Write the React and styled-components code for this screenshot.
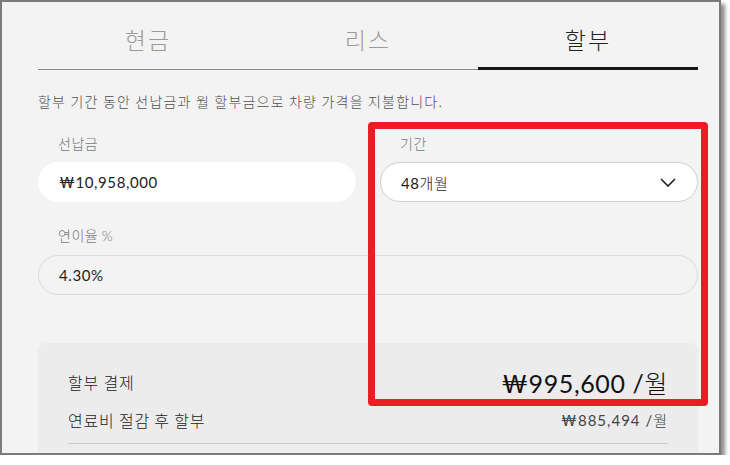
import styled, { createGlobalStyle } from 'styled-components'

const GlobalStyle = createGlobalStyle`
  body {
    margin: 0;
    background: #ffffff;
    font-family: 'Lato', 'Noto Sans CJK KR', sans-serif;
  }
`

const KR = `'Noto Sans CJK KR', 'Noto Sans', sans-serif`
const NUM = `'Lato', 'Noto Sans CJK KR', sans-serif`

const tabs = ['현금', '리스', '할부']

const App = () => {
  return (
    <>
      <GlobalStyle />
      <Frame>
        <Content>
          <TabBar>
            {tabs.map((t, i) => (
              <Tab key={t} active={i === 2}>
                {t}
              </Tab>
            ))}
          </TabBar>

          <Description>할부 기간 동안 선납금과 월 할부금으로 차량 가격을 지불합니다.</Description>

          <FormGrid>
            <Field>
              <Label>선납금</Label>
              <Input variant="solid">₩10,958,000</Input>
            </Field>
            <Field>
              <Label>기간</Label>
              <Input variant="select">
                <span>
                  48<Kr>개월</Kr>
                </span>
                <Chevron viewBox="0 0 16 9">
                  <polyline points="1,1 8,8 15,1" />
                </Chevron>
              </Input>
            </Field>
            <Field wide>
              <Label>
                연이율 <Num>%</Num>
              </Label>
              <Input variant="outline">4.30%</Input>
            </Field>
          </FormGrid>

          <Summary>
            <Row height={34}>
              <RowLabel>할부 결제</RowLabel>
              <RowValue big>
                ₩995,600 /<Kr>월</Kr>
              </RowValue>
            </Row>
            <Row height={45} line>
              <RowLabel>연료비 절감 후 할부</RowLabel>
              <RowValue>
                ₩885,494 /<Kr>월</Kr>
              </RowValue>
            </Row>
            <Row height={40}>
              <RowLabel />
            </Row>
          </Summary>
        </Content>
        <Highlight />
      </Frame>
    </>
  )
}

export default App

const Frame = styled.div`
  position: relative;
  width: 717px;
  height: 451px;
  border: 2px solid #7b7b7b;
  background: #f3f3f3;
  box-shadow: 4px 4px 4px rgba(0, 0, 0, 0.45);
`

const Content = styled.div`
  height: 100%;
  overflow: hidden;
  padding: 0 21px 0 36px;
  box-sizing: border-box;
`

const TabBar = styled.div`
  display: grid;
  grid-template-columns: repeat(3, 1fr);
  box-shadow: inset 0 -1px 0 #8a8a8a;
`

const Tab = styled.div`
  height: 68px;
  box-sizing: border-box;
  padding-top: 26px;
  text-align: center;
  font-family: ${KR};
  font-weight: 300;
  font-size: 23px;
  line-height: 23px;
  letter-spacing: 2px;
  color: ${(p) => (p.active ? '#222' : '#9a9a9a')};
  border-bottom: 3px solid ${(p) => (p.active ? '#16181c' : 'transparent')};
`

const Description = styled.p`
  margin: 22px 0 0;
  font-family: ${KR};
  font-weight: 300;
  font-size: 14px;
  line-height: 18px;
  letter-spacing: 1.2px;
  color: #505050;
`

const FormGrid = styled.div`
  display: grid;
  grid-template-columns: 1fr 1fr;
  column-gap: 24px;
  row-gap: 24px;
  margin-top: 24px;
`

const Field = styled.div`
  display: flex;
  flex-direction: column;
  gap: 10px;
  grid-column: ${(p) => (p.wide ? '1 / -1' : 'auto')};
`

const Label = styled.div`
  padding-left: 20px;
  font-family: ${KR};
  font-weight: 300;
  font-size: 14px;
  line-height: 18px;
  letter-spacing: 0.5px;
  color: #777;
`

const Num = styled.span`
  font-family: ${NUM};
`

const Kr = styled.span`
  font-family: ${KR};
  font-weight: 300;
`

const Input = styled.div`
  height: 40px;
  box-sizing: border-box;
  border-radius: 20px;
  padding: 0 20px 0 20px;
  display: flex;
  align-items: center;
  justify-content: space-between;
  font-family: ${NUM};
  font-size: 15px;
  color: #222;
  letter-spacing: 0.6px;
  background: ${(p) => (p.variant === 'outline' ? 'transparent' : '#fff')};
  border: 1px solid
    ${(p) => (p.variant === 'solid' ? '#fff' : p.variant === 'select' ? '#cfcfcf' : '#dcdcdc')};
`

const Chevron = styled.svg`
  width: 16px;
  height: 9px;
  margin-right: 1px;
  fill: none;
  stroke: #222;
  stroke-width: 1.6;
`

const Summary = styled.div`
  margin-top: 48px;
  background: #ececec;
  border-radius: 8px;
  padding: 22px 30px 0 30px;
`

const Row = styled.div`
  height: ${(p) => p.height}px;
  box-sizing: border-box;
  display: flex;
  align-items: center;
  justify-content: space-between;
  border-bottom: 1px solid ${(p) => (p.line ? '#c9c9c9' : 'transparent')};
  padding-bottom: ${(p) => (p.line ? '3px' : '0')};
`

const RowLabel = styled.div`
  font-family: ${KR};
  font-weight: 300;
  font-size: 16px;
  letter-spacing: 0.8px;
  color: #222;
`

const RowValue = styled.div`
  font-family: ${NUM};
  font-size: ${(p) => (p.big ? '25px' : '15px')};
  color: ${(p) => (p.big ? '#111' : '#444')};
  letter-spacing: ${(p) => (p.big ? '0.6px' : '1px')};
`

const Highlight = styled.div`
  position: absolute;
  left: 366px;
  top: 120px;
  width: 340px;
  height: 284px;
  box-sizing: border-box;
  border: 7px solid #ed1c24;
  border-radius: 4px;
  pointer-events: none;
`
